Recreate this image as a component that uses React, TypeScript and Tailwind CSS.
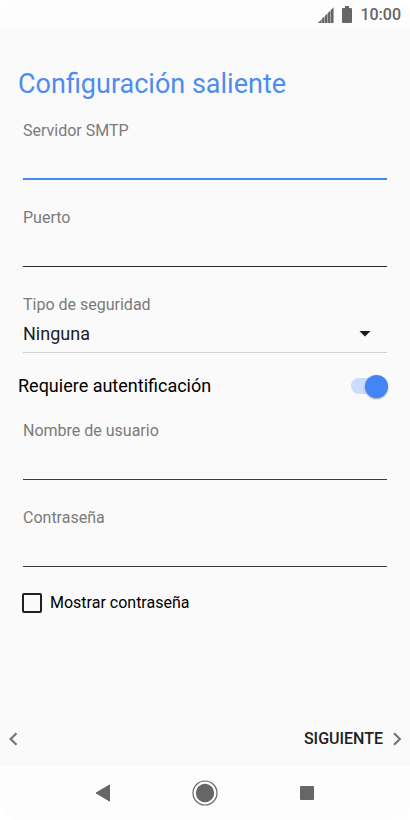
import { useState } from "react";

type FieldProps = {
  id: string;
  label: string;
  type?: string;
  lineClass: string;
};

function Field({ id, label, type = "text", lineClass }: FieldProps) {
  return (
    <div className="flex flex-col">
      <label htmlFor={id} className="text-base leading-5 text-[#7b7b7b]">
        {label}
      </label>
      <input
        id={id}
        type={type}
        className={`h-[39px] w-full bg-transparent text-lg text-[#212121] outline-none ${lineClass}`}
      />
    </div>
  );
}

function StatusBar() {
  return (
    <header className="flex h-7 items-center justify-end rounded-t-2xl bg-[#fdfdfd] pt-px pr-[9px] text-[#666666]">
      {/* Signal */}
      <svg width="16" height="16" viewBox="0 0 16 16" className="mr-2" aria-hidden="true">
        <path d="M0 16L16 0v16z" fill="#a8a8a8" />
        <path
          d="M0 16l3-3v3zM4 12l2-2v6H4zM7 9l2-2v9H7zM10 6l2-2v12h-2zM13 3l2-2v15h-2z"
          fill="currentColor"
        />
      </svg>
      {/* Battery */}
      <svg width="10" height="18" viewBox="0 0 10 18" className="mr-2" aria-hidden="true">
        <path
          d="M3 0h4v2h2a1 1 0 0 1 1 1v13a1 1 0 0 1-1 1H1a1 1 0 0 1-1-1V3a1 1 0 0 1 1-1h2z"
          fill="currentColor"
        />
      </svg>
      <span className="text-base leading-5 font-medium">10:00</span>
    </header>
  );
}

function NavigationBar() {
  return (
    <nav className="flex h-[54px] items-center justify-center gap-[76px] rounded-b-2xl bg-[#fdfdfd] text-[#666666]">
      <button type="button" aria-label="Atrás" className="flex w-[26px] justify-center">
        <svg width="16" height="18" viewBox="0 0 16 18" aria-hidden="true">
          <path
            d="M14.5 1v16L1 9z"
            fill="currentColor"
            stroke="currentColor"
            strokeWidth="1"
            strokeLinejoin="round"
          />
        </svg>
      </button>
      <button type="button" aria-label="Inicio" className="flex w-[26px] justify-center">
        <svg width="26" height="26" viewBox="0 0 26 26" aria-hidden="true">
          <circle cx="13" cy="13" r="12" fill="none" stroke="currentColor" strokeWidth="1.2" />
          <circle cx="13" cy="13" r="9.2" fill="currentColor" />
        </svg>
      </button>
      <button type="button" aria-label="Recientes" className="flex w-[26px] justify-center">
        <span className="size-[14px] rounded-[1px] bg-[#666666]" />
      </button>
    </nav>
  );
}

export default function App() {
  const [auth, setAuth] = useState(true);
  const [showPassword, setShowPassword] = useState(false);

  return (
    <div className="flex min-h-screen flex-col bg-white font-['Roboto',sans-serif]">
      <StatusBar />

      <main className="flex flex-1 flex-col bg-[#fafafa]">
        <form className="flex flex-1 flex-col" onSubmit={(e) => e.preventDefault()}>
          <h1 className="px-[18px] pt-[38px] text-[27px] leading-9 text-[#4f8cf0]">
            Configuración saliente
          </h1>

          <div className="flex flex-col gap-7 px-[23px] pt-[19px]">
            <Field id="smtp" label="Servidor SMTP" lineClass="border-b-2 border-[#4688f1]" />
            <Field id="port" label="Puerto" lineClass="border-b border-[#2b2b2b]" />
            <div className="flex flex-col">
              <label htmlFor="security" className="text-base leading-5 text-[#7b7b7b]">
                Tipo de seguridad
              </label>
              <div className="relative">
                <select
                  id="security"
                  defaultValue="none"
                  className="h-[38px] w-full appearance-none border-b border-[#d0d0d0] bg-transparent text-lg text-[#212121] outline-none"
                >
                  <option value="none">Ninguna</option>
                  <option value="ssl">SSL/TLS</option>
                  <option value="starttls">STARTTLS</option>
                </select>
                <svg
                  width="12"
                  height="6"
                  viewBox="0 0 12 6"
                  className="pointer-events-none absolute top-4 right-4"
                  aria-hidden="true"
                >
                  <path d="M0.5 0h11L6 5.6z" fill="#1c1c1c" />
                </svg>
              </div>
            </div>
          </div>

          <label className="mt-[19px] flex h-7 items-center justify-between pr-[23px] pl-[18px] text-lg text-black">
            Requiere autentificación
            <span className="relative flex h-4 w-9 items-center">
              <input
                type="checkbox"
                role="switch"
                checked={auth}
                onChange={(e) => setAuth(e.target.checked)}
                className="peer h-4 w-9 appearance-none rounded-full bg-[#d5d5d5] outline-none checked:bg-[#cbdcfb]"
              />
              <span className="pointer-events-none absolute left-0 size-[23px] rounded-full bg-white shadow-[0_1px_2px_rgba(0,0,0,0.35)] peer-checked:left-[14px] peer-checked:bg-[#4285f4]" />
            </span>
          </label>

          <div className="flex flex-col gap-7 px-[23px] pt-[21px]">
            <Field id="user" label="Nombre de usuario" lineClass="border-b border-[#3c3c3c]" />
            <Field
              id="password"
              label="Contraseña"
              type={showPassword ? "text" : "password"}
              lineClass="border-b border-[#3c3c3c]"
            />
          </div>

          <label className="mt-[26px] flex items-center gap-2 px-[22px] text-base leading-5 text-black">
            <input
              type="checkbox"
              checked={showPassword}
              onChange={(e) => setShowPassword(e.target.checked)}
              className="size-5 appearance-none rounded-xs border-2 border-[#212121] checked:bg-[#4285f4]"
            />
            Mostrar contraseña
          </label>

          <div className="mt-auto flex h-[54px] items-center justify-between px-2">
            <button type="button" aria-label="Anterior" className="text-[#757575]">
              <svg width="10" height="14" viewBox="0 0 10 14" aria-hidden="true">
                <path d="M8.5 1.2L2.6 7l5.9 5.8" fill="none" stroke="currentColor" strokeWidth="2.2" />
              </svg>
            </button>
            <button
              type="submit"
              className="flex items-center gap-[10px] text-base leading-5 font-medium text-[#212121]"
            >
              SIGUIENTE
              <svg width="9" height="14" viewBox="0 0 9 14" className="text-[#757575]" aria-hidden="true">
                <path d="M1 1.2L6.9 7 1 12.8" fill="none" stroke="currentColor" strokeWidth="2.2" />
              </svg>
            </button>
          </div>
        </form>
      </main>

      <NavigationBar />
    </div>
  );
}
